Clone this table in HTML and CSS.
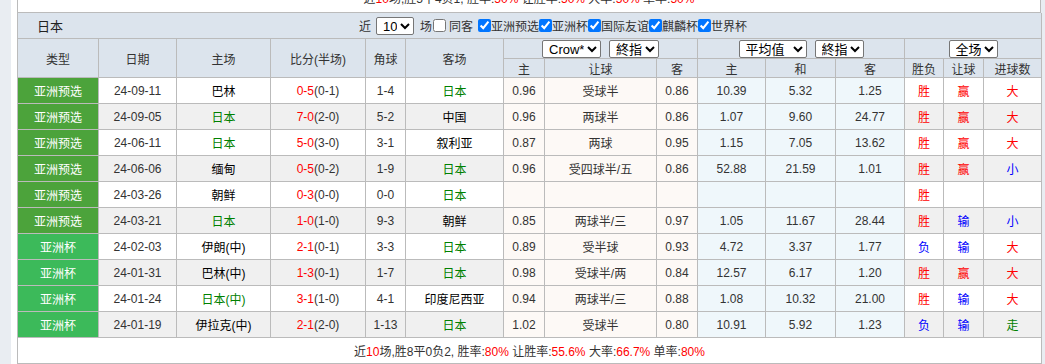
FILE: index.html
```html
<!DOCTYPE html>
<html lang="zh-CN">
<head>
    <meta charset="UTF-8">
    <meta name="viewport" content="width=device-width, initial-scale=1.0">
    <title>日本 近期战绩</title>
    <link rel="stylesheet" href="styles.css">
</head>
<body>

<div class="page">
    <div class="prev-sum">近<span class="red">10</span>场,胜5平4负1, 胜率:<span class="red">50%</span> 让胜率:<span class="red">50%</span> 大率:<span class="red">50%</span> 单率:<span class="red">50%</span></div>

    <table class="hist">
        <colgroup>
            <col style="width:81px"><col style="width:78px"><col style="width:94px"><col style="width:95px">
            <col style="width:40px"><col style="width:98px"><col style="width:41px"><col style="width:112px">
            <col style="width:41px"><col style="width:68px"><col style="width:70px"><col style="width:69px">
            <col style="width:39px"><col style="width:40px"><col style="width:58px">
        </colgroup>

        <tr class="title-row">
            <td colspan="15">
                <div class="title-bar">
                    <span class="team">日本</span>
                    <div class="filters">
                        <span>近</span>
                        <select class="sel sel-count"><option>10</option></select>
                        <span class="after-sel">场</span>
                        <input type="checkbox" class="chk chk-first"><span class="lbl-gap">同客</span>
                        <input type="checkbox" class="chk chk-gap" checked><span>亚洲预选</span>
                        <input type="checkbox" class="chk" checked><span>亚洲杯</span>
                        <input type="checkbox" class="chk" checked><span>国际友谊</span>
                        <input type="checkbox" class="chk" checked><span>麒麟杯</span>
                        <input type="checkbox" class="chk" checked><span>世界杯</span>
                    </div>
                </div>
            </td>
        </tr>

        <tr class="head1">
            <th rowspan="2">类型</th>
            <th rowspan="2">日期</th>
            <th rowspan="2">主场</th>
            <th rowspan="2">比分(半场)</th>
            <th rowspan="2">角球</th>
            <th rowspan="2">客场</th>
            <th colspan="3"><select class="sel sel-crow"><option>Crow*</option></select><select class="sel sel-end"><option>終指</option></select></th>
            <th colspan="3"><select class="sel sel-avg"><option>平均值</option></select><select class="sel sel-end2"><option>終指</option></select></th>
            <th colspan="3"><select class="sel sel-full"><option>全场</option></select></th>
        </tr>
        <tr class="head2">
            <th>主</th><th>让球</th><th>客</th>
            <th>主</th><th>和</th><th>客</th>
            <th>胜负</th><th>让球</th><th>进球数</th>
        </tr>

        <tr>
            <td class="type qual">亚洲预选</td><td>24-09-11</td><td class="tm">巴林</td>
            <td><span class="red">0-5</span>(0-1)</td><td>1-4</td><td class="tm jp">日本</td>
            <td class="odds">0.96</td><td class="odds">受球半</td><td class="odds">0.86</td>
            <td class="eu">10.39</td><td class="eu">5.32</td><td class="eu">1.25</td>
            <td class="red">胜</td><td class="red">赢</td><td class="red">大</td>
        </tr>
        <tr class="alt">
            <td class="type qual">亚洲预选</td><td>24-09-05</td><td class="tm jp">日本</td>
            <td><span class="red">7-0</span>(2-0)</td><td>5-2</td><td class="tm">中国</td>
            <td class="odds">0.96</td><td class="odds">两球半</td><td class="odds">0.86</td>
            <td class="eu">1.07</td><td class="eu">9.60</td><td class="eu">24.77</td>
            <td class="red">胜</td><td class="red">赢</td><td class="red">大</td>
        </tr>
        <tr>
            <td class="type qual">亚洲预选</td><td>24-06-11</td><td class="tm jp">日本</td>
            <td><span class="red">5-0</span>(3-0)</td><td>3-1</td><td class="tm">叙利亚</td>
            <td class="odds">0.87</td><td class="odds">两球</td><td class="odds">0.95</td>
            <td class="eu">1.15</td><td class="eu">7.05</td><td class="eu">13.62</td>
            <td class="red">胜</td><td class="red">赢</td><td class="red">大</td>
        </tr>
        <tr class="alt">
            <td class="type qual">亚洲预选</td><td>24-06-06</td><td class="tm">缅甸</td>
            <td><span class="red">0-5</span>(0-2)</td><td>1-9</td><td class="tm jp">日本</td>
            <td class="odds">0.96</td><td class="odds">受四球半/五</td><td class="odds">0.86</td>
            <td class="eu">52.88</td><td class="eu">21.59</td><td class="eu">1.01</td>
            <td class="red">胜</td><td class="red">赢</td><td class="blue">小</td>
        </tr>
        <tr>
            <td class="type qual">亚洲预选</td><td>24-03-26</td><td class="tm">朝鲜</td>
            <td><span class="red">0-3</span>(0-0)</td><td>0-0</td><td class="tm jp">日本</td>
            <td class="odds"></td><td class="odds"></td><td class="odds"></td>
            <td class="eu"></td><td class="eu"></td><td class="eu"></td>
            <td class="red">胜</td><td></td><td></td>
        </tr>
        <tr class="alt">
            <td class="type qual">亚洲预选</td><td>24-03-21</td><td class="tm jp">日本</td>
            <td><span class="red">1-0</span>(1-0)</td><td>9-3</td><td class="tm">朝鲜</td>
            <td class="odds">0.85</td><td class="odds">两球半/三</td><td class="odds">0.97</td>
            <td class="eu">1.05</td><td class="eu">11.67</td><td class="eu">28.44</td>
            <td class="red">胜</td><td class="blue">输</td><td class="blue">小</td>
        </tr>
        <tr>
            <td class="type cup">亚洲杯</td><td>24-02-03</td><td class="tm">伊朗(中)</td>
            <td><span class="red">2-1</span>(0-1)</td><td>3-3</td><td class="tm jp">日本</td>
            <td class="odds">0.89</td><td class="odds">受半球</td><td class="odds">0.93</td>
            <td class="eu">4.72</td><td class="eu">3.37</td><td class="eu">1.77</td>
            <td class="blue">负</td><td class="blue">输</td><td class="red">大</td>
        </tr>
        <tr class="alt">
            <td class="type cup">亚洲杯</td><td>24-01-31</td><td class="tm">巴林(中)</td>
            <td><span class="red">1-3</span>(0-1)</td><td>1-7</td><td class="tm jp">日本</td>
            <td class="odds">0.98</td><td class="odds">受球半/两</td><td class="odds">0.84</td>
            <td class="eu">12.57</td><td class="eu">6.17</td><td class="eu">1.20</td>
            <td class="red">胜</td><td class="red">赢</td><td class="red">大</td>
        </tr>
        <tr>
            <td class="type cup">亚洲杯</td><td>24-01-24</td><td class="tm jp">日本(中)</td>
            <td><span class="red">3-1</span>(1-0)</td><td>4-1</td><td class="tm">印度尼西亚</td>
            <td class="odds">0.94</td><td class="odds">两球半/三</td><td class="odds">0.88</td>
            <td class="eu">1.08</td><td class="eu">10.32</td><td class="eu">21.00</td>
            <td class="red">胜</td><td class="blue">输</td><td class="red">大</td>
        </tr>
        <tr class="alt">
            <td class="type cup">亚洲杯</td><td>24-01-19</td><td class="tm">伊拉克(中)</td>
            <td><span class="red">2-1</span>(2-0)</td><td>1-13</td><td class="tm jp">日本</td>
            <td class="odds">1.02</td><td class="odds">受球半</td><td class="odds">0.80</td>
            <td class="eu">10.91</td><td class="eu">5.92</td><td class="eu">1.23</td>
            <td class="blue">负</td><td class="blue">输</td><td class="green">走</td>
        </tr>

        <tr class="sum-row">
            <td colspan="15">近<span class="red">10</span>场,胜8平0负2, 胜率:<span class="red">80%</span> 让胜率:<span class="red">55.6%</span> 大率:<span class="red">66.7%</span> 单率:<span class="red">80%</span></td>
        </tr>
    </table>
</div>

</body>
</html>
```

FILE: styles.css
```css
body {
    margin: 0;
    background-color: #e9edf2;
    font-family: "Liberation Sans", "Noto Sans CJK SC", sans-serif;
    font-size: 12px;
    color: #333;
}

.page {
    margin-left: 11px;
    width: 1024px;
    padding-left: 6px;
    background-color: #fff;
}

.red { color: #f00; }
.blue { color: #00f; }
.green { color: #008000; }

.prev-sum {
    margin-top: -13px;
    height: 25px;
    line-height: 25px;
    border: 1px solid #bbb;
    border-top: none;
    text-align: center;
    box-sizing: content-box;
    width: 1022px;
}

.hist {
    width: 1024px;
    table-layout: fixed;
    border-collapse: collapse;
}

.hist td, .hist th {
    border: 1px solid #bbb;
    padding: 0;
    text-align: center;
    font-weight: normal;
    white-space: nowrap;
}

/* title bar */
.title-row td {
    border-top: none;
    height: 25px;
    background-color: #dce4ed;
}

.title-bar {
    display: flex;
    align-items: center;
    height: 25px;
}

.team {
    width: 341px;
    box-sizing: border-box;
    padding-left: 19px;
    text-align: left;
    font-size: 13px;
    color: #222;
}

.filters {
    display: flex;
    align-items: center;
    color: #333;
}

.sel {
    height: 18px;
    font-family: "Liberation Sans", "Noto Sans CJK SC", sans-serif;
    font-size: 13px;
    color: #000;
    background-color: #fff;
    border: 1px solid #767676;
    border-radius: 2px;
    padding: 0 0 0 2px;
    margin: 0 4px;
    vertical-align: middle;
}

.sel-count { width: 38px; margin: 0 0 0 5px; }
.after-sel { margin-left: 6px; }

.chk {
    width: 13px;
    height: 13px;
    margin: 0;
}

.chk-first { margin-left: 1px; }
.lbl-gap { margin-left: 3px; }
.chk-gap { margin-left: 5px; }

/* table head */
.head1 th, .head2 th {
    background-color: #dce4ed;
    color: #333;
}

.head1 th { height: 19px; }
.head2 th { height: 18px; }

.sel-crow { width: 59px; }
.sel-end { width: 50px; }
.sel-avg { width: 68px; }
.sel-end2 { width: 49px; }
.sel-full { width: 49px; }

/* data rows */
.hist tr td { height: 25px; }

.alt td { background-color: #f0f0f0; }

.hist td.type {
    color: #fff;
}

.hist td.qual { background-color: #4ca33b; }
.hist td.cup { background-color: #3cba5a; }

.hist td.odds { background-color: #fdf9f6; }
.hist td.eu { background-color: #eff7fb; }

.tm { color: #000; }
.tm.jp { color: #008000; }

.sum-row td {
    background-color: #fff;
    height: 25px;
}
```
